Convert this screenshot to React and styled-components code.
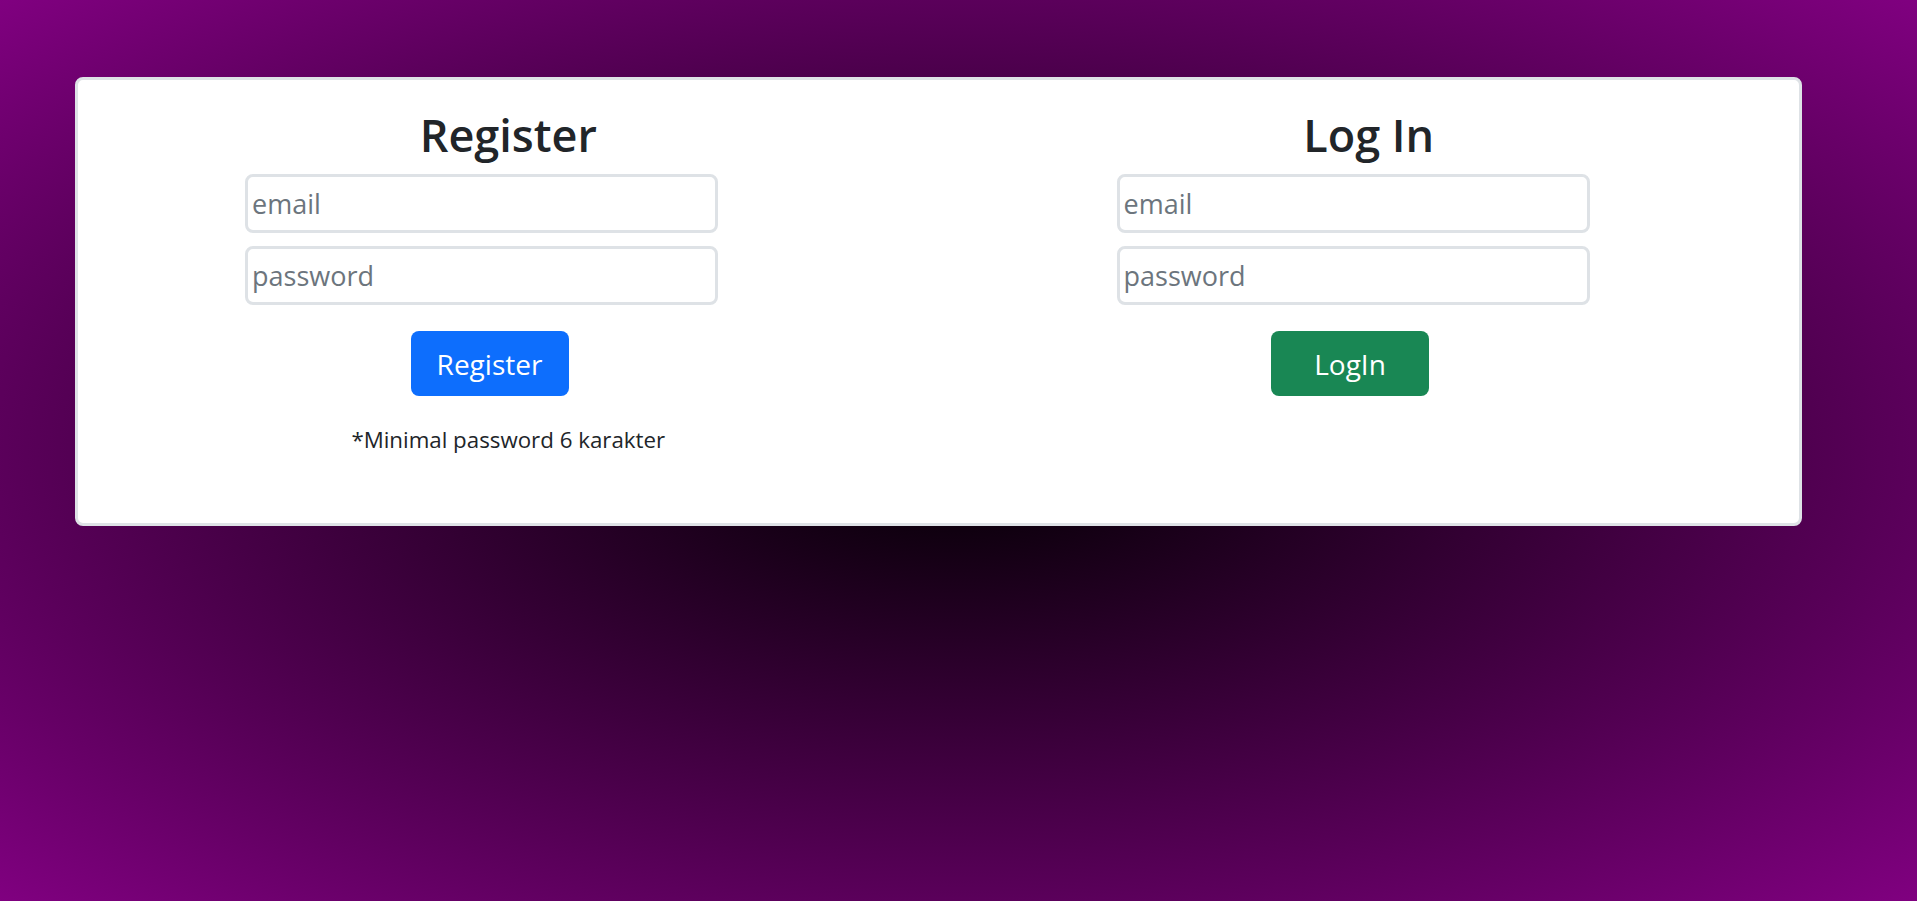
import React from 'react';
import styled, { createGlobalStyle } from 'styled-components';

const GlobalStyle = createGlobalStyle`
    html, body {
        margin: 0;
        padding: 0;
    }
    body {
        font-family: "Open Sans", "Noto Sans", sans-serif;
        color: #212529;
    }
`;

const Page = () => {
    return (
        <Background>
            <GlobalStyle />
            <Card>
                <Column>
                    <Title>Register</Title>
                    <Form $offset={167}>
                        <Input type="email" placeholder="email" />
                        <Input type="password" placeholder="password" />
                        <Button $color="#0d6efd" $shift={16}>Register</Button>
                    </Form>
                    <Note>*Minimal password 6 karakter</Note>
                </Column>
                <Column>
                    <Title>Log In</Title>
                    <Form $offset={178}>
                        <Input type="email" placeholder="email" />
                        <Input type="password" placeholder="password" />
                        <Button $color="#198754" $shift={-6}>LogIn</Button>
                    </Form>
                </Column>
            </Card>
        </Background>
    )
}

export default Page;

const Background = styled.div`
    min-height: 100vh;
    padding-top: 77px;
    box-sizing: border-box;
    background: radial-gradient(ellipse at center, #000 0%, #800080 100%);
    overflow: hidden;
`;

const Card = styled.div`
    width: 1727px;
    margin-left: 75px;
    box-sizing: border-box;
    background: #fff;
    border: 3px solid #dee2e6;
    border-radius: 8px;
    display: grid;
    grid-template-columns: 1fr 1fr;
    padding: 28px 0 67px;
`;

const Column = styled.div`
    display: flex;
    flex-direction: column;
    align-items: center;
`;

const Title = styled.h1`
    margin: 0;
    font-size: 45px;
    line-height: 54px;
    font-weight: 600;
    color: #212529;
`;

const Form = styled.div`
    align-self: flex-start;
    margin-left: ${p => p.$offset}px;
    margin-top: 12px;
    width: 473px;
    display: flex;
    flex-direction: column;
    align-items: center;
    gap: 13px;
`;

const Input = styled.input`
    width: 100%;
    height: 59px;
    box-sizing: border-box;
    border: 3px solid #dee2e6;
    border-radius: 8px;
    padding: 0 4px;
    font-family: "Open Sans", sans-serif;
    font-size: 27px;
    color: #212529;
    outline: none;
    &::placeholder {
        color: #6c757d;
    }
`;

const Button = styled.button`
    margin-top: 13px;
    margin-left: ${p => p.$shift}px;
    width: 158px;
    height: 65px;
    border: none;
    border-radius: 8px;
    background: ${p => p.$color};
    color: #fff;
    font-family: "Open Sans", sans-serif;
    font-size: 28px;
    cursor: pointer;
`;

const Note = styled.p`
    margin: 27px 0 0;
    font-size: 22.3px;
    line-height: 33px;
`;
